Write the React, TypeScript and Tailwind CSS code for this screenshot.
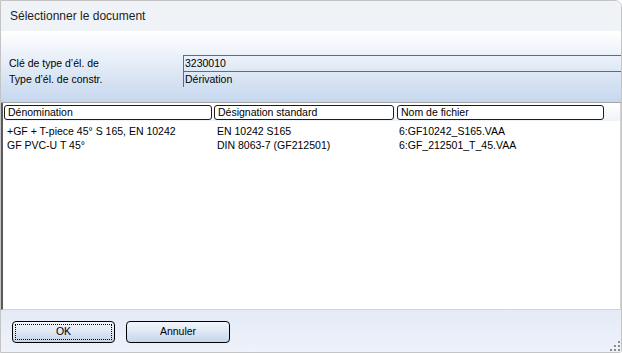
import React from "react";

const rows = [
  { name: "+GF + T-piece 45° S 165, EN 10242", norm: "EN 10242 S165", file: "6:GF10242_S165.VAA" },
  { name: "GF PVC-U T 45°", norm: "DIN 8063-7 (GF212501)", file: "6:GF_212501_T_45.VAA" },
];

function ResizeGrip() {
  const dots = [
    [8, 0],
    [4, 4], [8, 4],
    [0, 8], [4, 8], [8, 8],
  ];
  return (
    <svg width="10" height="10" className="absolute right-[1px] bottom-[1px]">
      {dots.map(([x, y], i) => (
        <rect key={i} x={x} y={y} width="2" height="2" fill="#8a8a8a" />
      ))}
    </svg>
  );
}

export default function App() {
  return (
    <div className="w-[622px] h-[353px] bg-white">
      <div className="relative w-[622px] h-[353px] flex flex-col border border-[#c4c4c4] rounded-tr-[7px] rounded-br-[3px] overflow-hidden text-[10.5px] text-black font-['Liberation_Sans',sans-serif]">
        {/* Title */}
        <div className="h-[30px] shrink-0 bg-[#eff3f7] flex items-center pl-[9px] text-[12px] text-[#1e1e1e]">
          Sélectionner le document
        </div>

        {/* Header fields */}
        <div className="h-[72px] shrink-0 bg-gradient-to-b from-white to-[#c6d7ee] pt-[24px] border-b border-[#a3a3a3]">
          <div className="flex h-[16px]">
            <div className="w-[182px] pl-[8px] leading-[16px]">Clé de type d’él. de</div>
            <div className="flex-1 border-t border-l border-[#6a6a6a] pl-[1px] leading-[15px]">3230010</div>
          </div>
          <div className="flex h-[16px]">
            <div className="w-[182px] pl-[8px] leading-[16px]">Type d’él. de constr.</div>
            <div className="flex-1 border-t border-l border-[#6a6a6a] pl-[1px] leading-[15px]">Dérivation</div>
          </div>
        </div>

        {/* List */}
        <div className="flex-1 flex flex-col bg-white border-l-2 border-l-[#5a5a5a] border-b border-b-[#d4d4d4] border-r border-r-[#d4d4d4]">
          <div className="h-[18px] flex items-center gap-[2px] pl-[1px] bg-gradient-to-b from-white to-[#eef3f9]">
            <div className="w-[208px] h-[15px] border border-[#1c1c1c] rounded-[3px] bg-white pl-[3px] leading-[13px]">Dénomination</div>
            <div className="w-[180px] h-[15px] border border-[#1c1c1c] rounded-[3px] bg-white pl-[3px] leading-[13px]">Désignation standard</div>
            <div className="w-[207px] h-[15px] ml-[1px] border border-[#1c1c1c] rounded-[3px] bg-white pl-[3px] leading-[13px]">Nom de fichier</div>
          </div>
          <div className="pt-[3px]">
            {rows.map((r) => (
              <div key={r.file} className="flex h-[14px] leading-[14px]">
                <div className="w-[212px] pl-[4px]">{r.name}</div>
                <div className="w-[182px] pl-[2px]">{r.norm}</div>
                <div className="flex-1 pl-[2px]">{r.file}</div>
              </div>
            ))}
          </div>
        </div>

        {/* Footer */}
        <div className="h-[42px] shrink-0 bg-gradient-to-b from-[#e4ebf7] to-[#eef2fa] flex items-start pt-[11px] pl-[11px] gap-[11px]">
          <button className="w-[103px] h-[22px] border border-black rounded-[4px] bg-gradient-to-b from-[#f4f7fb] to-[#c5d6ed] p-[2px]">
            <div className="w-full h-full border border-dotted border-black flex items-center justify-center">OK</div>
          </button>
          <button className="w-[104px] h-[22px] border border-black rounded-[4px] bg-gradient-to-b from-[#f4f7fb] to-[#c5d6ed] flex items-center justify-center">
            Annuler
          </button>
        </div>
        <ResizeGrip />
      </div>
    </div>
  );
}
